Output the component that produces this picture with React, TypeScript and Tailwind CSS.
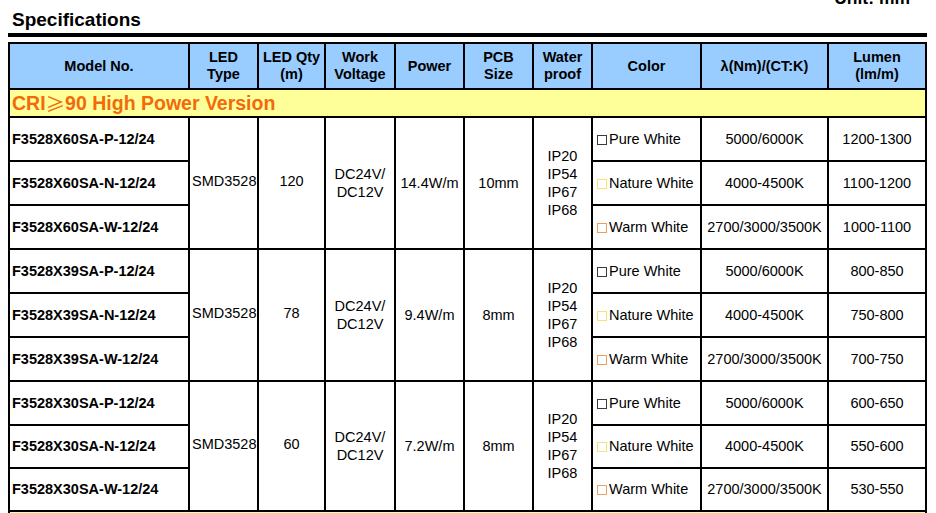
import React from "react";

type Row = { model: string; color: "P" | "N" | "W"; ct: string; lumen: string };
type Group = { qty: string; power: string; pcb: string; rows: Row[] };

const groups: Group[] = [
  {
    qty: "120",
    power: "14.4W/m",
    pcb: "10mm",
    rows: [
      { model: "F3528X60SA-P-12/24", color: "P", ct: "5000/6000K", lumen: "1200-1300" },
      { model: "F3528X60SA-N-12/24", color: "N", ct: "4000-4500K", lumen: "1100-1200" },
      { model: "F3528X60SA-W-12/24", color: "W", ct: "2700/3000/3500K", lumen: "1000-1100" },
    ],
  },
  {
    qty: "78",
    power: "9.4W/m",
    pcb: "8mm",
    rows: [
      { model: "F3528X39SA-P-12/24", color: "P", ct: "5000/6000K", lumen: "800-850" },
      { model: "F3528X39SA-N-12/24", color: "N", ct: "4000-4500K", lumen: "750-800" },
      { model: "F3528X39SA-W-12/24", color: "W", ct: "2700/3000/3500K", lumen: "700-750" },
    ],
  },
  {
    qty: "60",
    power: "7.2W/m",
    pcb: "8mm",
    rows: [
      { model: "F3528X30SA-P-12/24", color: "P", ct: "5000/6000K", lumen: "600-650" },
      { model: "F3528X30SA-N-12/24", color: "N", ct: "4000-4500K", lumen: "550-600" },
      { model: "F3528X30SA-W-12/24", color: "W", ct: "2700/3000/3500K", lumen: "530-550" },
    ],
  },
];

function ColorCell({ c }: { c: "P" | "N" | "W" }) {
  const label = c === "P" ? "Pure White" : c === "N" ? "Nature White" : "Warm White";
  const box =
    c === "P" ? "border-[#3a3a3a]" : c === "N" ? "border-[#f5e27a]" : "border-[#eea060]";
  return (
    <div className="bg-white flex items-center pl-[4px]">
      <span className={`inline-block w-[10px] h-[10px] border ${box} mr-[2px] mt-[1px]`} />
      <span>{label}</span>
    </div>
  );
}

export default function App() {
  const headers: React.ReactNode[] = [
    "Model No.",
    <>LED<br />Type</>,
    <>LED Qty<br />(m)</>,
    <>Work<br />Voltage</>,
    "Power",
    <>PCB<br />Size</>,
    <>Water<br />proof</>,
    "Color",
    "λ(Nm)/(CT:K)",
    <>Lumen<br />(lm/m)</>,
  ];

  return (
    <div
      className="w-[936px] h-[513px] overflow-hidden bg-white text-black"
      style={{ fontFamily: '"Liberation Sans", Arial, sans-serif' }}
    >
      <div className="flex justify-between items-start">
        <div className="ml-[12px] mt-[9px] text-[19px] leading-[22px] font-bold">Specifications</div>
        <div className="-mt-[12px] mr-[26px] text-[17.5px] leading-[20px] font-bold">Unit: mm</div>
      </div>
      <div className="ml-[8px] mt-[2px] w-[919px] h-[4px] bg-black" />
      <div className="ml-[8px] mt-[5px] w-[919px] bg-black p-[2px] grid gap-[2px] grid-cols-[178px_67px_65px_68px_67px_67px_57px_107px_125px_96px] grid-rows-[44px_26px_42px_42px_42px_42px_42px_42px_42px_41px_41px_30px] text-[14.5px] leading-[17px]">
        {headers.map((h, i) => (
          <div
            key={i}
            className="bg-[#99ccff] font-bold flex items-center justify-center text-center"
          >
            <div>{h}</div>
          </div>
        ))}
        <div className="col-span-10 bg-[#ffff99] flex items-center pl-[2px] text-[19.5px] font-bold text-[#f26a0c]">
          CRI
          <span style={{ fontFamily: '"Noto Sans CJK SC", sans-serif', fontWeight: 400 }}>≥</span>
          90 High Power Version
        </div>
        {groups.map((g, gi) => (
          <React.Fragment key={gi}>
            {g.rows.map((r, ri) => (
              <React.Fragment key={ri}>
                <div className="bg-white font-bold flex items-center pl-[2px]">{r.model}</div>
                {ri === 0 && (
                  <>
                    <div className="row-span-3 bg-white flex items-center pl-[2px] pb-[4px]">SMD3528</div>
                    <div className="row-span-3 bg-white flex items-center justify-center pb-[4px]">{g.qty}</div>
                    <div className="row-span-3 bg-white flex items-center justify-center text-center leading-[18px]">
                      <div>DC24V/<br />DC12V</div>
                    </div>
                    <div className="row-span-3 bg-white flex items-center justify-center">{g.power}</div>
                    <div className="row-span-3 bg-white flex items-center justify-center">{g.pcb}</div>
                    <div className="row-span-3 bg-white flex items-center justify-center text-center leading-[18px]">
                      <div>IP20<br />IP54<br />IP67<br />IP68</div>
                    </div>
                  </>
                )}
                <ColorCell c={r.color} />
                <div className="bg-white flex items-center justify-center">{r.ct}</div>
                <div className="bg-white flex items-center justify-center">{r.lumen}</div>
              </React.Fragment>
            ))}
          </React.Fragment>
        ))}
        <div className="col-span-10 bg-[#ffff99]" />
      </div>
    </div>
  );
}
